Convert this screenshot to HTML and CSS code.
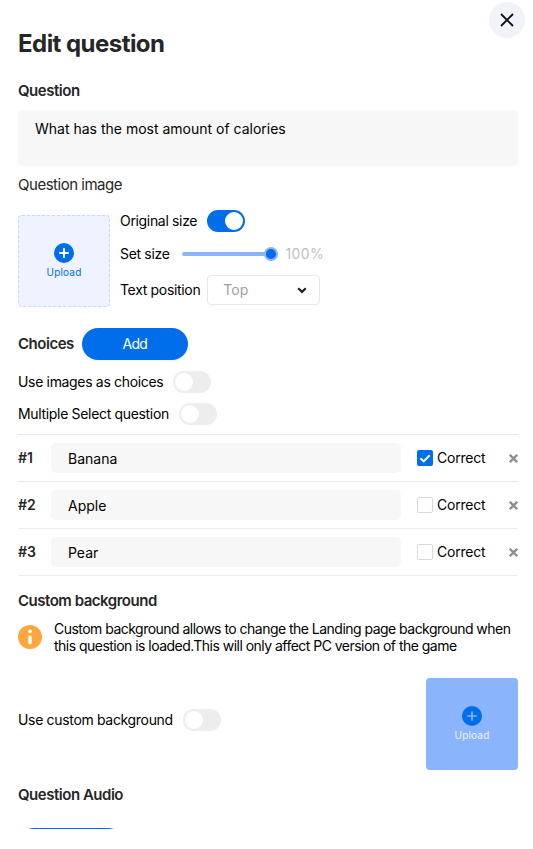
FILE: index.html
```
<!DOCTYPE html>
<html lang="en">
<head>
  <meta charset="UTF-8" />
  <meta name="viewport" content="width=device-width, initial-scale=1.0"/>
  <title>Edit question</title>
  <link rel="stylesheet" href="styles.css">
</head>
<body>
  <div class="modal">
    <button class="modal-close" aria-label="Close">
      <svg width="14" height="14" viewBox="0 0 14 14"><path d="M1 1l12 12M13 1L1 13" stroke="#10101c" stroke-width="1.9" fill="none"/></svg>
    </button>

    <h1>Edit question</h1>

    <h2 class="question-title">Question</h2>
    <div class="question-text">What has the most amount of calories</div>

    <!-- Question image -->
    <h3>Question image</h3>
    <div class="image-settings">
      <div class="upload">
        <svg width="20" height="20" viewBox="0 0 20 20"><circle cx="10" cy="10" r="10" fill="#006eeb"/><path d="M10 5.2v9.6M5.2 10h9.6" stroke="#fff" stroke-width="2"/></svg>
        <span>Upload</span>
      </div>
      <div class="image-options">
        <div class="option">
          <span class="label">Original size</span>
          <span class="toggle on"></span>
        </div>
        <div class="option size-option">
          <span class="label">Set size</span>
          <span class="slider"><span class="slider-thumb"></span></span>
          <span class="slider-value">100%</span>
        </div>
        <div class="option position-option">
          <span class="label">Text position</span>
          <div class="select">
            <span>Top</span>
            <svg width="10" height="7" viewBox="0 0 10 7"><path d="M1.2 1.3L5 4.9l3.8-3.6" fill="none" stroke="#222" stroke-width="2.2"/></svg>
          </div>
        </div>
      </div>
    </div>

    <!-- Choices -->
    <div class="choices-header">
      <h2>Choices</h2>
      <button class="add-btn">Add</button>
    </div>
    <div class="setting">
      <span class="label">Use images as choices</span>
      <span class="toggle"></span>
    </div>
    <div class="setting">
      <span class="label">Multiple Select question</span>
      <span class="toggle"></span>
    </div>

    <div class="choices">
      <div class="choice">
        <span class="number">#1</span>
        <div class="choice-text">Banana</div>
        <span class="checkbox checked"><svg width="16" height="16" viewBox="0 0 16 16"><path d="M3.4 8.2l3.3 3.2 6-6.2" fill="none" stroke="#fff" stroke-width="2"/></svg></span>
        <span class="correct">Correct</span>
        <svg class="remove" width="9" height="9" viewBox="0 0 9 9"><path d="M.8.8l7.4 7.4M8.2.8L.8 8.2" stroke="#8e8e8e" stroke-width="2.3"/></svg>
      </div>
      <div class="choice">
        <span class="number">#2</span>
        <div class="choice-text">Apple</div>
        <span class="checkbox"></span>
        <span class="correct">Correct</span>
        <svg class="remove" width="9" height="9" viewBox="0 0 9 9"><path d="M.8.8l7.4 7.4M8.2.8L.8 8.2" stroke="#8e8e8e" stroke-width="2.3"/></svg>
      </div>
      <div class="choice">
        <span class="number">#3</span>
        <div class="choice-text">Pear</div>
        <span class="checkbox"></span>
        <span class="correct">Correct</span>
        <svg class="remove" width="9" height="9" viewBox="0 0 9 9"><path d="M.8.8l7.4 7.4M8.2.8L.8 8.2" stroke="#8e8e8e" stroke-width="2.3"/></svg>
      </div>
    </div>

    <!-- Custom background -->
    <h2 class="background-title">Custom background</h2>
    <div class="info">
      <svg width="24" height="24" viewBox="0 0 24 24"><circle cx="12" cy="12" r="12" fill="#ffa63d"/><circle cx="12" cy="6.3" r="1.9" fill="#fff"/><path d="M12 12v5.8" stroke="#fff" stroke-width="3.4" stroke-linecap="round"/></svg>
      <p>Custom background allows to change the Landing page background when<br>this question is loaded.This will only affect PC version of the game</p>
    </div>
    <div class="background-row">
      <div class="setting">
        <span class="label">Use custom background</span>
        <span class="toggle"></span>
      </div>
      <div class="upload filled">
        <svg width="20" height="20" viewBox="0 0 20 20"><circle cx="10" cy="10" r="10" fill="#006eeb"/><path d="M10 5.4v9.2M5.4 10h9.2" stroke="#8ab4fc" stroke-width="1.7"/></svg>
        <span>Upload</span>
      </div>
    </div>

    <h2 class="audio-title">Question Audio</h2>
    <button class="add-btn audio-btn" aria-label="Add audio"></button>
  </div>
</body>
</html>
```
FILE: styles.css
```
* {
  box-sizing: border-box;
}

body {
  margin: 0;
  background-color: #fff;
  font-family: Inter, sans-serif;
  font-size: 14px;
  color: #000;
}

.modal {
  position: relative;
  height: 829px;
  padding: 28px 15px 0 18px;
  overflow: hidden;
}

.modal-close {
  position: absolute;
  top: 2px;
  right: 8px;
  width: 36px;
  height: 36px;
  padding: 0;
  display: flex;
  align-items: center;
  justify-content: center;
  border: none;
  border-radius: 50%;
  background: #f2f3f9;
}

h1 {
  margin: 0;
  font-size: 24px;
  line-height: 32px;
  font-weight: 700;
  letter-spacing: -0.54px;
  color: #262626;
}

h2,
h3 {
  margin: 0;
  font-size: 15px;
  line-height: 20px;
  font-weight: 600;
  letter-spacing: -0.48px;
  color: #262626;
}

h3 {
  margin-top: 9px;
  font-weight: 400;
}

.question-title {
  margin: 21px 0 9px;
}

.question-text {
  height: 56px;
  padding: 10px 17px;
  border-radius: 5px;
  background: #f7f7f7;
  line-height: 18px;
}

.image-settings {
  display: flex;
  gap: 10px;
  margin-top: 15px;
}

.upload {
  display: flex;
  flex-direction: column;
  align-items: center;
  width: 92px;
  height: 92px;
  margin-top: 5px;
  padding-top: 27px;
  border: 1px dashed #c6d9fa;
  border-radius: 4px;
  background: #eef3ff;
  font-size: 10px;
  line-height: 12px;
  letter-spacing: 0.2px;
  color: #006eeb;
}

.upload span {
  margin-top: 3px;
}

.option,
.setting {
  display: flex;
  align-items: center;
  gap: 10px;
}

.option {
  height: 22px;
}

.size-option {
  margin-top: 11px;
  gap: 12px;
}

.position-option {
  height: 30px;
  margin-top: 10px;
  gap: 7px;
}

.label,
.correct {
  padding-bottom: 2px;
  white-space: nowrap;
  letter-spacing: -0.33px;
}

.correct {
  letter-spacing: -0.22px;
}

.toggle {
  display: flex;
  width: 38px;
  height: 22px;
  padding: 2px;
  border-radius: 11px;
  background: #ededed;
}

.toggle::before {
  content: "";
  width: 18px;
  height: 18px;
  border-radius: 50%;
  background: #fff;
}

.toggle.on {
  justify-content: flex-end;
  background: #006eeb;
}

.slider {
  display: flex;
  align-items: center;
  justify-content: flex-end;
  width: 96px;
  height: 4px;
  border-radius: 2px;
  background: #8ab4fc;
}

.slider-thumb {
  flex: none;
  width: 14px;
  height: 14px;
  border: 2px solid #8ab4fc;
  border-radius: 50%;
  background: #006eeb;
}

.slider-value {
  margin-left: -4px;
  padding-bottom: 1px;
  letter-spacing: 0.4px;
  color: #bfbfbf;
}

.select {
  display: flex;
  align-items: center;
  justify-content: space-between;
  width: 113px;
  height: 30px;
  padding: 0 12px 0 15px;
  border: 1px solid #e8e8e8;
  border-radius: 4px;
  color: #a29ea9;
}

.select span {
  padding-bottom: 1px;
}

.choices-header {
  display: flex;
  align-items: center;
  gap: 8px;
  margin: 21px 0 11px;
}

.add-btn {
  width: 106px;
  height: 32px;
  padding: 0 0 1px;
  border: none;
  border-radius: 16px;
  background: #006eeb;
  box-shadow: 0 2px 2px rgba(0, 0, 0, 0.03);
  font-family: inherit;
  font-size: 14px;
  letter-spacing: -0.7px;
  color: #fff;
}

.setting {
  margin-bottom: 10px;
}

.choices {
  margin-top: -1px;
  border-top: 1px solid #ebebeb;
}

.choice {
  display: flex;
  align-items: center;
  height: 47px;
  border-bottom: 1px solid #ebebeb;
}

.number {
  width: 33px;
  padding-bottom: 1px;
  font-weight: 600;
  letter-spacing: -0.1px;
  color: #262626;
}

.choice-text {
  width: 350px;
  height: 30px;
  padding: 1px 17px 0;
  border-radius: 5px;
  background: #f7f7f7;
  line-height: 30px;
}

.checkbox {
  width: 16px;
  height: 16px;
  margin: 0 4px 0 16px;
  border: 1px solid #d9d9d9;
  border-radius: 2px;
}

.checkbox.checked {
  display: flex;
  border: none;
  background: #006eeb;
}

.remove {
  margin-left: auto;
}

.background-title {
  margin-top: 15px;
}

.info {
  display: flex;
  align-items: center;
  gap: 12px;
  margin-top: 9px;
}

.info svg {
  flex: none;
}

.info p {
  margin: 0;
  line-height: 17px;
  letter-spacing: -0.525px;
  white-space: nowrap;
}

.background-row {
  display: flex;
  align-items: center;
  justify-content: space-between;
  margin-top: 24px;
}

.background-row .setting {
  margin-bottom: 8px;
}

.upload.filled {
  margin: 0;
  padding-top: 28px;
  border: none;
  background: #8ab4fc;
  color: #eef3ff;
}

.audio-title {
  margin: 15px 0 23px;
}

.audio-btn {
  display: block;
}
```
